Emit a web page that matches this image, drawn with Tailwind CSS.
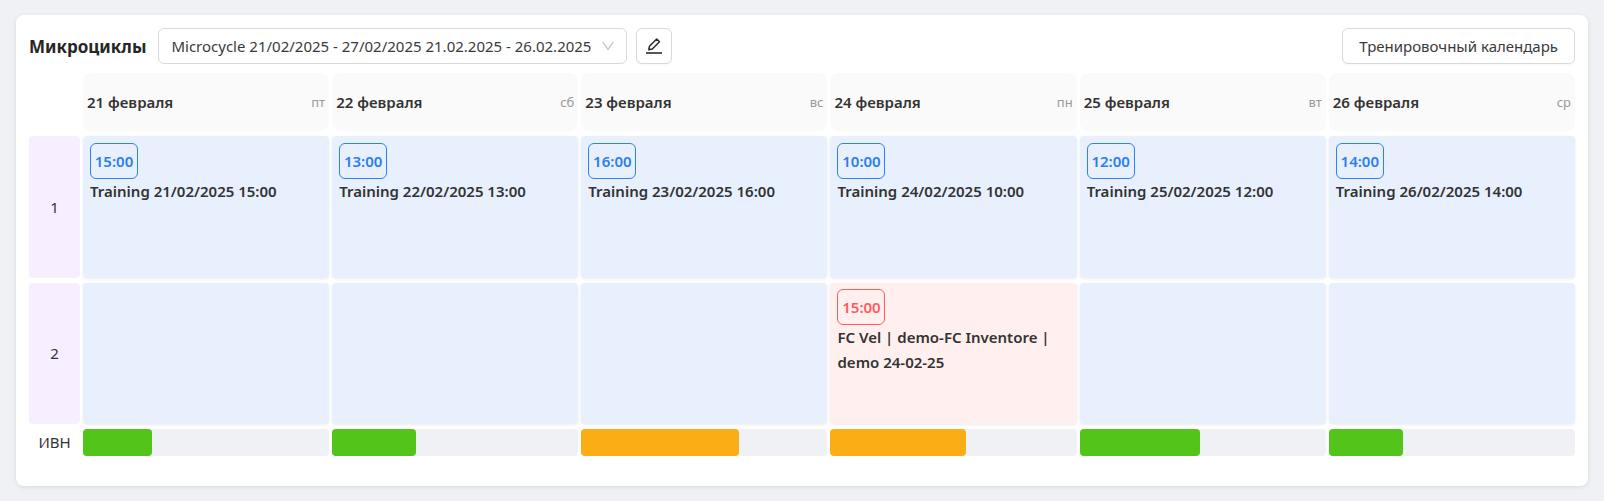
<!DOCTYPE html>
<html lang="ru">
  <head>
    <meta charset="UTF-8" />
    <meta name="viewport" content="width=device-width, initial-scale=1.0" />
    <title>Микроциклы</title>
    <script src="https://cdn.jsdelivr.net/npm/@tailwindcss/browser@4"></script>
  </head>

  <body class="bg-[#f0f1f5] px-4 py-[15px] font-['Noto_Sans',sans-serif] text-[15px] leading-[25px] text-[#333]">
    <main class="rounded-lg bg-white pt-[13px] pb-[25px] shadow-[0_1px_4px_rgba(0,0,0,0.1)]">
      <header class="flex items-center px-[13px]">
        <h1 class="mr-[10px] text-[17px] font-bold text-[#262626]">
          <label for="microcycle">Микроциклы</label>
        </h1>
        <div class="relative mr-[9px] ml-[2px]">
          <select
            id="microcycle"
            class="h-9 w-[469px] appearance-none rounded-md border border-[#d9d9d9] bg-white pr-8 pl-3 text-[#3a3a3a]"
          >
            <option>Microcycle 21/02/2025 - 27/02/2025 21.02.2025 - 26.02.2025</option>
          </select>
          <svg class="pointer-events-none absolute top-3 right-[13px] h-3 w-3" viewBox="0 0 12 12" fill="none" stroke="#bfbfbf" stroke-width="1.2" aria-hidden="true">
            <path d="M.8 2 6 9.4 11.2 2" />
          </svg>
        </div>
        <button
          type="button"
          aria-label="Редактировать"
          class="flex h-9 w-9 items-center justify-center rounded-md border border-[#d9d9d9] bg-white shadow-[0_2px_0_rgba(0,0,0,0.02)]"
        >
          <svg class="h-[18px] w-[18px]" viewBox="0 0 18 18" fill="none" stroke="#2b2b2b" stroke-width="1.5" aria-hidden="true">
            <path d="M3.8 12.7 4.5 9.2 11.7 2l2.8 2.8-7.2 7.2-3.5.7Z" stroke-linejoin="round" />
            <path d="M1 16h16" stroke-width="1.6" />
          </svg>
        </button>
        <button
          type="button"
          class="ml-auto h-9 rounded-md border border-[#d9d9d9] bg-white px-4 text-[#3a3a3a] shadow-[0_2px_0_rgba(0,0,0,0.02)]"
        >
          Тренировочный календарь
        </button>
      </header>

      <div class="mt-1 px-[10px]">
        <table class="w-full table-fixed border-separate border-spacing-x-[3px] border-spacing-y-[5px]">
          <colgroup>
            <col class="w-[51px]" />
            <col span="6" />
          </colgroup>
          <thead>
            <tr class="h-[58px]">
              <td></td>
              <th scope="col" class="rounded-lg bg-[#fafafa] px-1 font-semibold">
                <div class="flex items-center justify-between">21 февраля <span class="text-[13px] font-normal text-[#999]">пт</span></div>
              </th>
              <th scope="col" class="rounded-lg bg-[#fafafa] px-1 font-semibold">
                <div class="flex items-center justify-between">22 февраля <span class="text-[13px] font-normal text-[#999]">сб</span></div>
              </th>
              <th scope="col" class="rounded-lg bg-[#fafafa] px-1 font-semibold">
                <div class="flex items-center justify-between">23 февраля <span class="text-[13px] font-normal text-[#999]">вс</span></div>
              </th>
              <th scope="col" class="rounded-lg bg-[#fafafa] px-1 font-semibold">
                <div class="flex items-center justify-between">24 февраля <span class="text-[13px] font-normal text-[#999]">пн</span></div>
              </th>
              <th scope="col" class="rounded-lg bg-[#fafafa] px-1 font-semibold">
                <div class="flex items-center justify-between">25 февраля <span class="text-[13px] font-normal text-[#999]">вт</span></div>
              </th>
              <th scope="col" class="rounded-lg bg-[#fafafa] px-1 font-semibold">
                <div class="flex items-center justify-between">26 февраля <span class="text-[13px] font-normal text-[#999]">ср</span></div>
              </th>
            </tr>
          </thead>
          <tbody>
            <tr class="h-[142px]">
              <th scope="row" class="rounded bg-[#f7efff] font-normal">1</th>
              <td class="rounded bg-[#e8f0fe] p-[7px] align-top font-semibold shadow-[0_1px_3px_rgba(0,0,0,0.08)]">
                <time class="flex h-9 w-12 items-center justify-center rounded-md border border-[#2f80f5] text-[#2a7df0]">15:00</time>
                <p>Training 21/02/2025 15:00</p>
              </td>
              <td class="rounded bg-[#e8f0fe] p-[7px] align-top font-semibold shadow-[0_1px_3px_rgba(0,0,0,0.08)]">
                <time class="flex h-9 w-12 items-center justify-center rounded-md border border-[#2f80f5] text-[#2a7df0]">13:00</time>
                <p>Training 22/02/2025 13:00</p>
              </td>
              <td class="rounded bg-[#e8f0fe] p-[7px] align-top font-semibold shadow-[0_1px_3px_rgba(0,0,0,0.08)]">
                <time class="flex h-9 w-12 items-center justify-center rounded-md border border-[#2f80f5] text-[#2a7df0]">16:00</time>
                <p>Training 23/02/2025 16:00</p>
              </td>
              <td class="rounded bg-[#e8f0fe] p-[7px] align-top font-semibold shadow-[0_1px_3px_rgba(0,0,0,0.08)]">
                <time class="flex h-9 w-12 items-center justify-center rounded-md border border-[#2f80f5] text-[#2a7df0]">10:00</time>
                <p>Training 24/02/2025 10:00</p>
              </td>
              <td class="rounded bg-[#e8f0fe] p-[7px] align-top font-semibold shadow-[0_1px_3px_rgba(0,0,0,0.08)]">
                <time class="flex h-9 w-12 items-center justify-center rounded-md border border-[#2f80f5] text-[#2a7df0]">12:00</time>
                <p>Training 25/02/2025 12:00</p>
              </td>
              <td class="rounded bg-[#e8f0fe] p-[7px] align-top font-semibold shadow-[0_1px_3px_rgba(0,0,0,0.08)]">
                <time class="flex h-9 w-12 items-center justify-center rounded-md border border-[#2f80f5] text-[#2a7df0]">14:00</time>
                <p>Training 26/02/2025 14:00</p>
              </td>
            </tr>
            <tr class="h-[141px]">
              <th scope="row" class="rounded bg-[#f7efff] font-normal">2</th>
              <td class="rounded bg-[#e8f0fe] shadow-[0_1px_3px_rgba(0,0,0,0.08)]"></td>
              <td class="rounded bg-[#e8f0fe] shadow-[0_1px_3px_rgba(0,0,0,0.08)]"></td>
              <td class="rounded bg-[#e8f0fe] shadow-[0_1px_3px_rgba(0,0,0,0.08)]"></td>
              <td class="rounded bg-[#fff0ef] px-[7px] py-[6px] align-top font-semibold shadow-[0_1px_3px_rgba(0,0,0,0.08)]">
                <time class="flex h-9 w-12 items-center justify-center rounded-md border border-[#ff5c60] text-[#ff5c60]">15:00</time>
                <p>FC Vel | demo-FC Inventore | demo 24-02-25</p>
              </td>
              <td class="rounded bg-[#e8f0fe] shadow-[0_1px_3px_rgba(0,0,0,0.08)]"></td>
              <td class="rounded bg-[#e8f0fe] shadow-[0_1px_3px_rgba(0,0,0,0.08)]"></td>
            </tr>
          </tbody>
          <tfoot>
            <tr class="h-[27px]">
              <th scope="row" class="font-normal">ИВН</th>
              <td class="rounded bg-[#f0f1f5]"><div class="h-[27px] rounded bg-[#52c41a]" style="width: 28%"></div></td>
              <td class="rounded bg-[#f0f1f5]"><div class="h-[27px] rounded bg-[#52c41a]" style="width: 34%"></div></td>
              <td class="rounded bg-[#f0f1f5]"><div class="h-[27px] rounded bg-[#faad14]" style="width: 64%"></div></td>
              <td class="rounded bg-[#f0f1f5]"><div class="h-[27px] rounded bg-[#faad14]" style="width: 55%"></div></td>
              <td class="rounded bg-[#f0f1f5]"><div class="h-[27px] rounded bg-[#52c41a]" style="width: 49%"></div></td>
              <td class="rounded bg-[#f0f1f5]"><div class="h-[27px] rounded bg-[#52c41a]" style="width: 30%"></div></td>
            </tr>
          </tfoot>
        </table>
      </div>
    </main>
  </body>
</html>
